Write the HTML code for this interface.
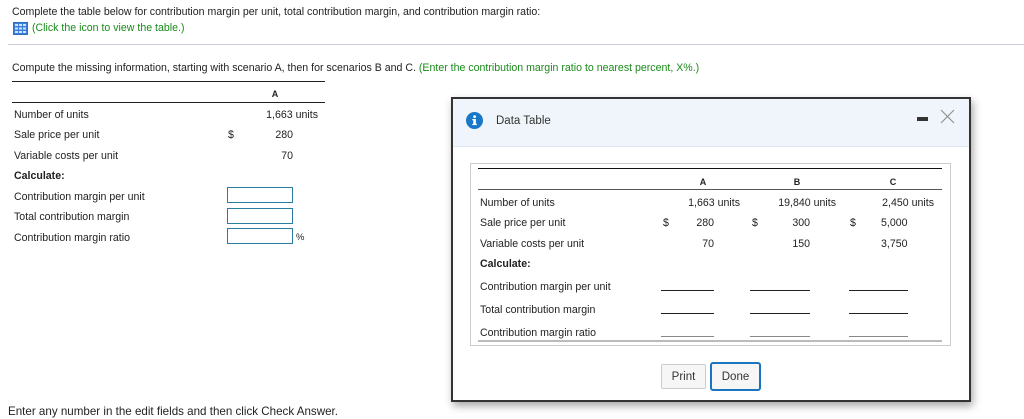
<!DOCTYPE html>
<html><head><meta charset="utf-8"><style>
*{margin:0;padding:0;box-sizing:border-box}
body{width:1024px;height:419px;background:#fff;font-family:"Liberation Sans",Arial,sans-serif;font-size:10.6px;color:#222;position:relative;overflow:hidden}
.a{position:absolute;white-space:nowrap;line-height:12px}
.r{text-align:right}
.c{text-align:center}
.hl{position:absolute;height:0}
.in{position:absolute;width:66px;height:16px;border:1px solid #2a7da0;background:#fff}
.ul{position:absolute;height:0;border-top:1px solid #222}
</style></head><body>
<div class="a" style="left:12px;top:6px">Complete the table below for contribution margin per unit, total contribution margin, and contribution margin ratio:</div>
<svg style="position:absolute;left:13px;top:22px" width="15" height="13" viewBox="0 0 15 13"><rect x="0.5" y="0.5" width="14" height="12" fill="#3b7fd6" stroke="#2f6fc2"/><g fill="#cfe2fb"><rect x="2" y="2" width="3" height="2"/><rect x="6" y="2" width="3" height="2"/><rect x="10" y="2" width="3" height="2"/><rect x="2" y="5.5" width="3" height="2"/><rect x="6" y="5.5" width="3" height="2"/><rect x="10" y="5.5" width="3" height="2"/><rect x="2" y="9" width="3" height="2"/><rect x="6" y="9" width="3" height="2"/><rect x="10" y="9" width="3" height="2"/></g></svg>
<div class="a" style="left:32px;top:22px;color:#1a8a1a">(Click the icon to view the table.)</div>
<div class="hl" style="left:8px;top:44px;width:1016px;border-top:1px solid #ccd"></div>
<div class="a" style="left:12px;top:62px">Compute the missing information, starting with scenario A, then for scenarios B and C. <span style="color:#1a8a1a">(Enter the contribution margin ratio to nearest percent, X%.)</span></div>

<div class="hl" style="left:12px;top:81px;width:313px;border-top:1px solid #222"></div>
<div class="a c" style="left:255px;top:88px;width:40px;font-weight:bold;font-size:9px">A</div>
<div class="hl" style="left:12px;top:102px;width:313px;border-top:1px solid #222"></div>
<div class="a" style="left:14px;top:109px">Number of units</div><div class="a r" style="left:240px;top:109px;width:78px">1,663 units</div>
<div class="a" style="left:14px;top:129px">Sale price per unit</div><div class="a" style="left:228px;top:129px">$</div><div class="a r" style="left:250px;top:129px;width:43px">280</div>
<div class="a" style="left:14px;top:150px">Variable costs per unit</div><div class="a r" style="left:250px;top:150px;width:43px">70</div>
<div class="a" style="left:14px;top:170px;font-weight:bold">Calculate:</div>
<div class="a" style="left:14px;top:191px">Contribution margin per unit</div>
<div class="a" style="left:14px;top:211px">Total contribution margin</div>
<div class="a" style="left:14px;top:232px">Contribution margin ratio</div>
<div class="in" style="left:227px;top:187px"></div>
<div class="in" style="left:227px;top:208px"></div>
<div class="in" style="left:227px;top:228px"></div>
<div class="a" style="left:296px;top:232px;font-size:9.5px">%</div>
<div class="a" style="left:8px;top:406px;font-size:11.6px">Enter any number in the edit fields and then click Check Answer.</div>

<div style="position:absolute;left:451px;top:97px;width:520px;height:305px;border:2px solid #333;background:#fff;box-shadow:2px 4px 8px rgba(0,0,0,.35)">
 <div style="position:absolute;left:0;top:0;right:0;height:48px;background:#eff5fa;border-bottom:1px solid #e0e8ef"></div>
</div>
<svg style="position:absolute;left:466px;top:112px" width="17" height="17" viewBox="0 0 17 17"><circle cx="8.5" cy="8.5" r="8.5" fill="#1a78c8"/><rect x="7.3" y="7" width="2.6" height="6" fill="#fff"/><rect x="6.3" y="7" width="3" height="1.3" fill="#fff"/><rect x="6.3" y="11.8" width="4.6" height="1.3" fill="#fff"/><circle cx="8.6" cy="4.6" r="1.4" fill="#fff"/></svg>
<div class="a" style="left:496px;top:115px;font-size:11.5px;color:#333">Data Table</div>
<div style="position:absolute;left:917px;top:117px;width:11px;height:4px;background:#333"></div>
<svg style="position:absolute;left:940px;top:109px" width="15" height="15" viewBox="0 0 15 15"><path d="M1 1L14 14M14 1L1 14" stroke="#888" stroke-width="1"/></svg>

<div style="position:absolute;left:470px;top:163px;width:481px;height:183px;border:1px solid #ccc"></div>
<div class="hl" style="left:478px;top:168px;width:464px;border-top:1px solid #111"></div>
<div class="a c" style="left:683px;top:176px;width:40px;font-weight:bold;font-size:9px">A</div>
<div class="a c" style="left:777px;top:176px;width:40px;font-weight:bold;font-size:9px">B</div>
<div class="a c" style="left:873px;top:176px;width:40px;font-weight:bold;font-size:9px">C</div>
<div class="hl" style="left:478px;top:189px;width:464px;border-top:1px solid #555"></div>
<div class="a" style="left:480px;top:197px">Number of units</div>
<div class="a r" style="left:660px;top:197px;width:80px">1,663 units</div>
<div class="a r" style="left:756px;top:197px;width:80px">19,840 units</div>
<div class="a r" style="left:854px;top:197px;width:80px">2,450 units</div>
<div class="a" style="left:480px;top:217px">Sale price per unit</div>
<div class="a" style="left:663px;top:217px">$</div><div class="a r" style="left:690px;top:217px;width:24px">280</div>
<div class="a" style="left:752px;top:217px">$</div><div class="a r" style="left:786px;top:217px;width:24px">300</div>
<div class="a" style="left:850px;top:217px">$</div><div class="a" style="left:881px;top:217px">5,000</div>
<div class="a" style="left:480px;top:238px">Variable costs per unit</div>
<div class="a r" style="left:690px;top:238px;width:24px">70</div>
<div class="a r" style="left:786px;top:238px;width:24px">150</div>
<div class="a" style="left:881px;top:238px">3,750</div>
<div class="a" style="left:480px;top:258px;font-weight:bold">Calculate:</div>
<div class="a" style="left:480px;top:281px">Contribution margin per unit</div>
<div class="a" style="left:480px;top:304px">Total contribution margin</div>
<div class="a" style="left:480px;top:327px">Contribution margin ratio</div>
<div class="ul" style="left:661px;top:290px;width:53px"></div><div class="ul" style="left:750px;top:290px;width:60px"></div><div class="ul" style="left:849px;top:290px;width:59px"></div>
<div class="ul" style="left:661px;top:313px;width:53px"></div><div class="ul" style="left:750px;top:313px;width:60px"></div><div class="ul" style="left:849px;top:313px;width:59px"></div>
<div class="ul" style="left:661px;top:336px;width:53px;border-color:#888"></div><div class="ul" style="left:750px;top:336px;width:60px;border-color:#888"></div><div class="ul" style="left:849px;top:336px;width:59px;border-color:#888"></div>
<div class="hl" style="left:478px;top:340px;width:464px;border-top:2px solid #bbb"></div>

<div style="position:absolute;left:661px;top:364px;width:45px;height:25px;border:1px solid #ccc;border-radius:2px;background:#f6f6f6;font-size:11.5px;color:#333;text-align:center;line-height:24px">Print</div>
<div style="position:absolute;left:710px;top:362px;width:51px;height:29px;border:2px solid #1a74c0;border-radius:3px;background:#f6f6f6;font-size:11.5px;color:#333;text-align:center;line-height:26px">Done</div>
</body></html>
